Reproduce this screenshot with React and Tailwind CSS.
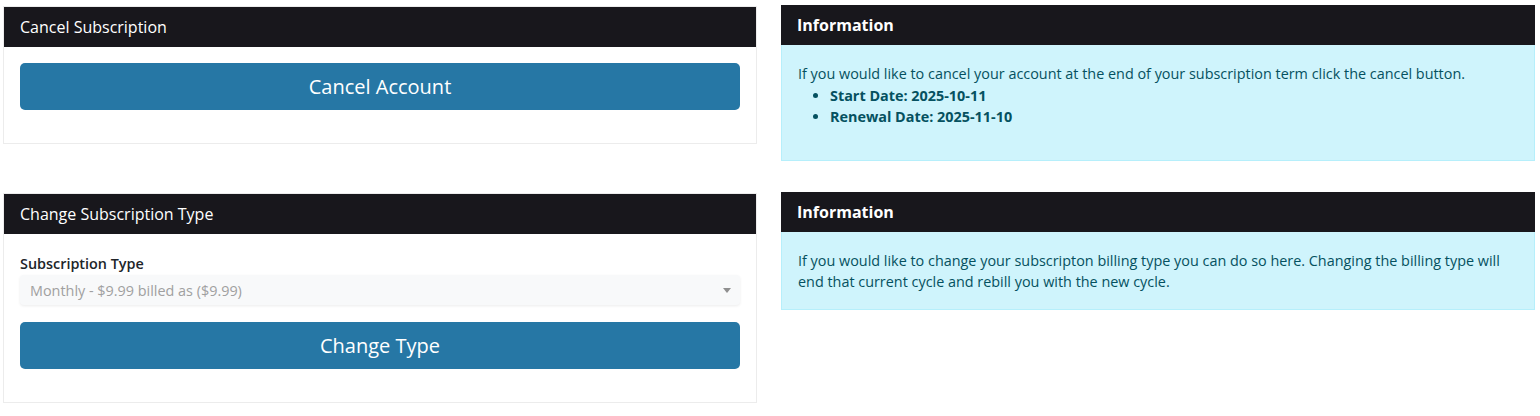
import React from 'react';

function Card({ title, children }) {
  return (
    <div className="border border-[#ececec] bg-white">
      <div className="bg-[#18171c] h-[40px] px-4 flex items-center text-white text-[16px]">{title}</div>
      <div className="px-4 pt-4 pb-[33px]">{children}</div>
    </div>
  );
}

function Info({ children }) {
  return (
    <div>
      <div className="bg-[#18171c] h-[40px] px-4 flex items-center text-white text-[16px] font-bold">Information</div>
      <div className="bg-[#cff4fc] border border-t-0 border-[#b6effb] text-[#055160] text-[14.4px] leading-[21.6px] px-4 pt-[18px] pb-[16px]">
        {children}
      </div>
    </div>
  );
}

function BigButton({ children }) {
  return (
    <button className="w-full h-[47px] rounded-[5px] bg-[#2677a5] text-white text-[20px] flex items-center justify-center">
      {children}
    </button>
  );
}

export default function App() {
  return (
    <div className="bg-white min-h-[416px] pl-[3px] pr-[5px] pt-[5px] font-['Open_Sans',sans-serif]">
      <div className="grid grid-cols-[754px_754px] gap-x-[24px] gap-y-[31px] items-start">
        <div className="mt-px">
          <Card title="Cancel Subscription">
            <BigButton>Cancel Account</BigButton>
          </Card>
        </div>
        <Info>
          <p>If you would like to cancel your account at the end of your subscription term click the cancel button.</p>
          <ul className="list-disc pl-8 font-bold mb-4">
            <li>Start Date: 2025-10-11</li>
            <li>Renewal Date: 2025-11-10</li>
          </ul>
        </Info>
        <div className="mt-px">
          <Card title="Change Subscription Type">
            <div className="pt-[3px]">
              <label className="block text-[14.4px] leading-[21.6px] font-semibold text-[#212529]">Subscription Type</label>
              <div className="mt-[1px] h-[30px] rounded-[4px] bg-[#f8f9fa] shadow-[0_1px_3px_rgba(0,0,0,0.08)] flex items-center justify-between pl-[10px] pr-[9px] text-[14.4px] text-[#a0a0a0]">
                <span>Monthly - $9.99 billed as ($9.99)</span>
                <svg width="8" height="5" viewBox="0 0 8 5"><path d="M0 0h8L4 5z" fill="#8f8f8f" /></svg>
              </div>
              <div className="mt-[17px]">
                <BigButton>Change Type</BigButton>
              </div>
            </div>
          </Card>
        </div>
        <Info>
          <p>If you would like to change your subscripton billing type you can do so here. Changing the billing type will end that current cycle and rebill you with the new cycle.</p>
        </Info>
      </div>
    </div>
  );
}
